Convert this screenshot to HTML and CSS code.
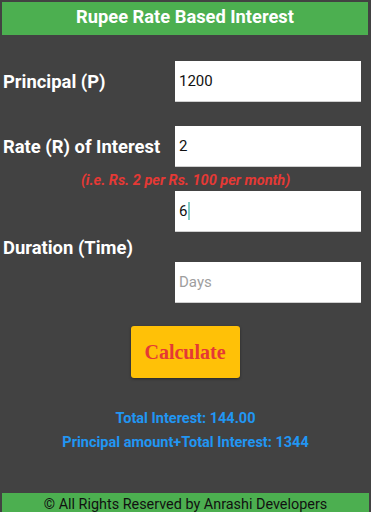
FILE: index.html
```html
<!DOCTYPE html>
<html>
<head>
<meta charset="utf-8">
<link rel="stylesheet" href="styles.css">
</head>
<body>
<div class="header">Rupee Rate Based Interest</div>
<div class="main">
  <div class="row row-first">
    <div class="label">Principal (P)</div>
    <div class="field">1200</div>
  </div>
  <div class="row row-rate">
    <div class="label">Rate (R) of Interest</div>
    <div class="field">2</div>
  </div>
  <div class="hint">(i.e. Rs. 2 per Rs. 100 per month)</div>
  <div class="row row-duration">
    <div class="label">Duration (Time)</div>
    <div class="fields">
      <div class="field">6<span class="caret"></span></div>
      <div class="field placeholder">Days</div>
    </div>
  </div>
  <div class="btn-wrap"><div class="btn">Calculate</div></div>
  <div class="results">
    <div class="result">Total Interest: 144.00</div>
    <div class="result">Principal amount+Total Interest: 1344</div>
  </div>
</div>
<div class="footer">© All Rights Reserved by Anrashi Developers</div>
</body>
</html>
```

FILE: styles.css
```css
html, body {
  margin: 0;
  padding: 0;
  background: #424242;
  font-family: Roboto, "Liberation Sans", sans-serif;
  overflow: hidden;
}
body {
  width: 371px;
  height: 512px;
}
.header {
  margin: 2px 3px 0 2px;
  height: 33px;
  background: #4caf50;
  color: #fff;
  font-weight: bold;
  font-size: 18.3px;
  line-height: 30px;
  text-align: center;
}
.main {
  display: flex;
  flex-direction: column;
}
.row {
  display: flex;
  align-items: center;
}
.row-first { margin-top: 26px; }
.row-rate { margin-top: 24px; }
.row-duration { margin-top: 1px; }
.label {
  flex: 1;
  padding-left: 3px;
  color: #fff;
  font-weight: bold;
  font-size: 18.4px;
  white-space: nowrap;
}
.fields {
  display: flex;
  flex-direction: column;
  gap: 30px;
}
.field {
  width: 182px;
  height: 40px;
  margin-right: 10px;
  background: #fff;
  padding-left: 4px;
  display: flex;
  align-items: center;
  color: #111;
  font-size: 15px;
  border-bottom: 1px solid #cfcfcf;
  box-sizing: content-box;
}
.placeholder { color: #9e9e9e; }
.caret {
  display: inline-block;
  width: 2px;
  height: 18px;
  background: #80cbc4;
  margin-left: 1px;
}
.hint {
  margin-top: 3px;
  height: 20px;
  line-height: 21px;
  text-align: center;
  color: #e53935;
  font-style: italic;
  font-weight: bold;
  font-size: 14.5px;
}
.btn-wrap {
  display: flex;
  justify-content: center;
  margin-top: 23px;
  padding-right: 1px;
}
.btn {
  width: 109px;
  height: 52px;
  background: #ffc107;
  border-radius: 3px;
  color: #e53935;
  font-family: "Liberation Serif", "DejaVu Serif", serif;
  font-weight: bold;
  font-size: 20px;
  display: flex;
  align-items: center;
  justify-content: center;
  box-shadow: 0 1px 3px rgba(0,0,0,0.4);
}
.results {
  margin-top: 29px;
  text-align: center;
}
.result {
  color: #2196f3;
  font-weight: bold;
  font-size: 14.5px;
  line-height: 24px;
}
.footer {
  margin: 38px 2px 0 2px;
  height: 22px;
  background: #4caf50;
  color: #111;
  font-size: 14.4px;
  line-height: 24px;
  text-align: center;
}
```
